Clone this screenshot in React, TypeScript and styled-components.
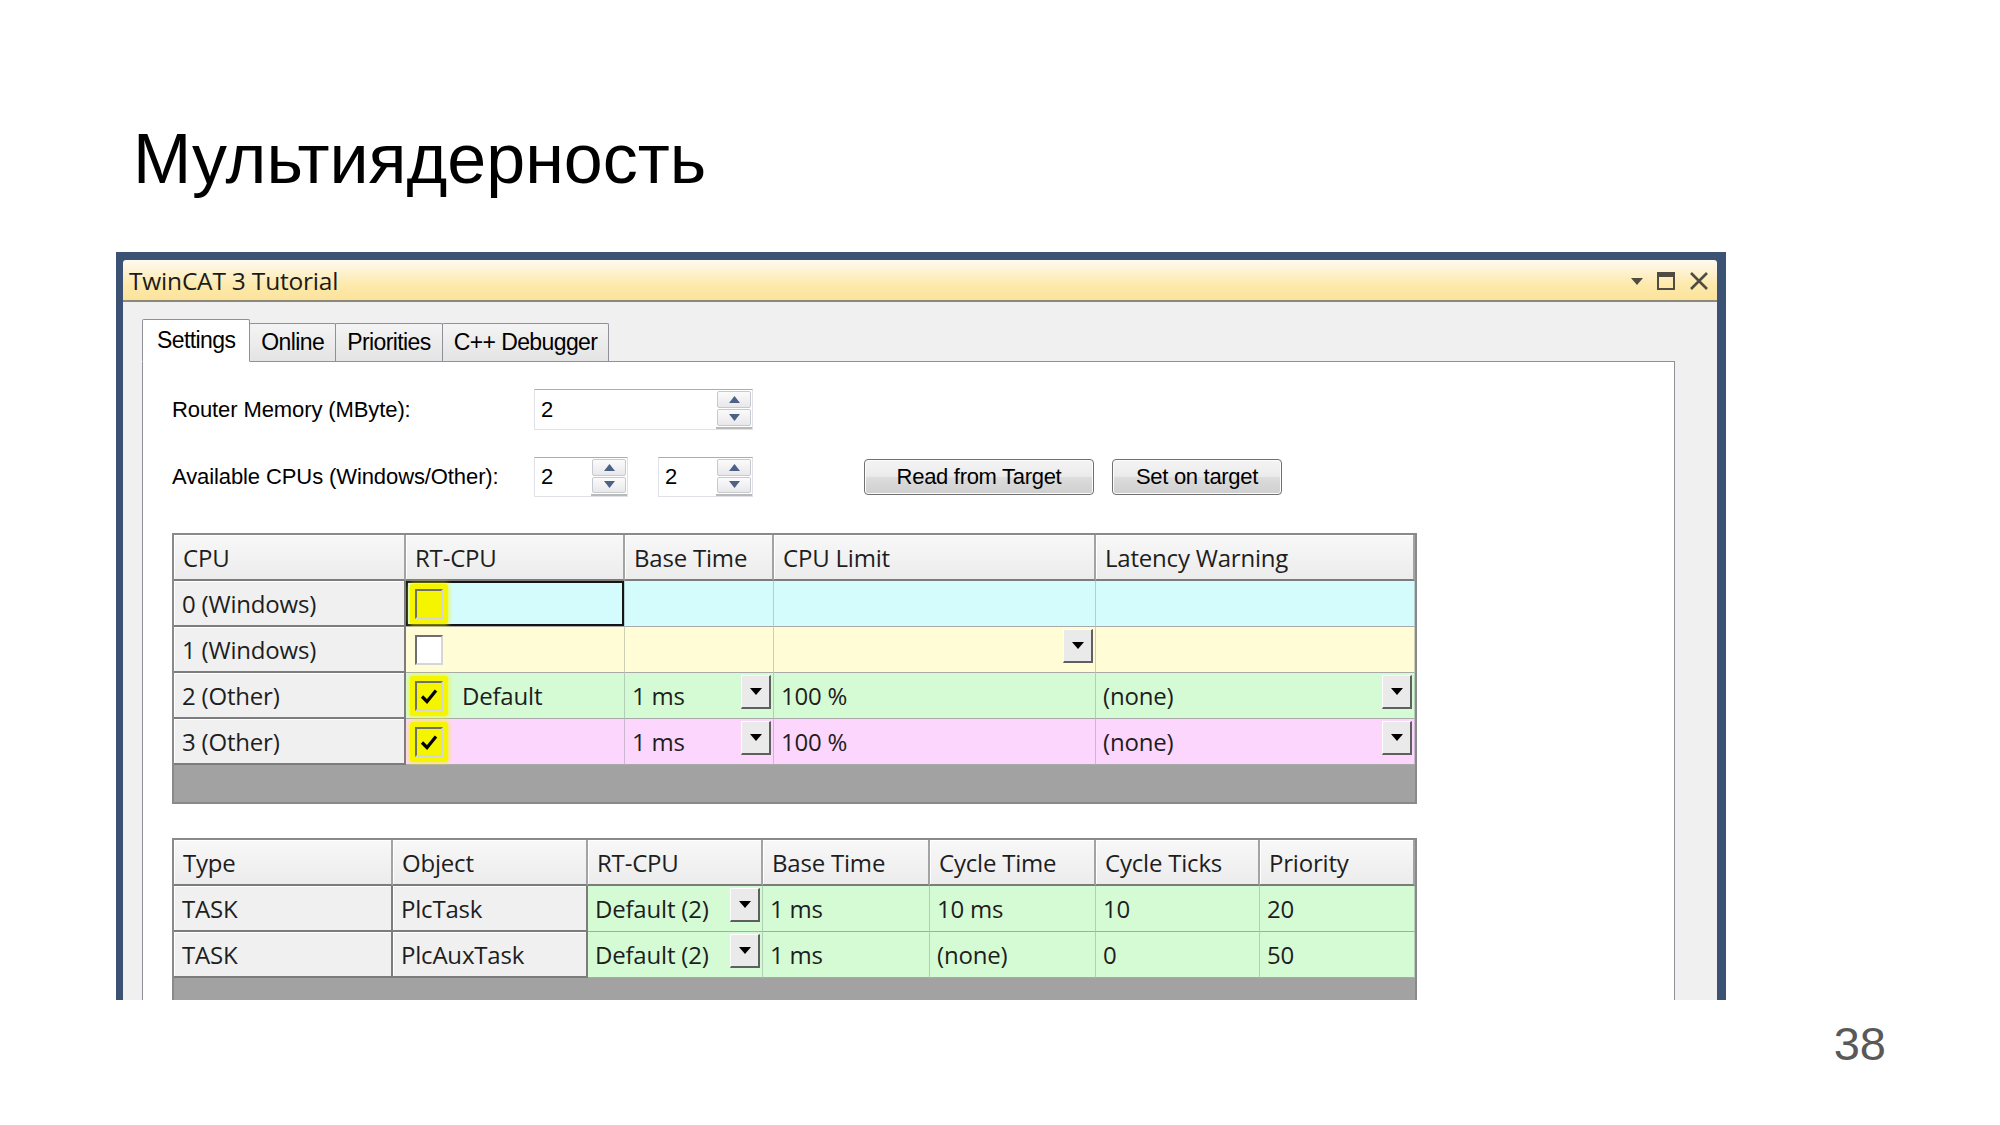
import React from 'react';
import styled, { createGlobalStyle } from 'styled-components';

const GlobalStyle = createGlobalStyle`
  html, body {
    margin: 0;
    padding: 0;
    background: #ffffff;
  }
  body {
    width: 2000px;
    height: 1125px;
    overflow: hidden;
  }
`;

const rowColors = {
  cyan: '#d4fcfc',
  yellow: '#fffcd6',
  green: '#d5fbd5',
  pink: '#fdd6fd',
};

type RowColor = keyof typeof rowColors;

function Check() {
  return (
    <svg width="18" height="16" viewBox="0 0 18 16">
      <path d="M2 8.5 L7 13.5 L16 2.5" fill="none" stroke="#000" strokeWidth="3.2" />
    </svg>
  );
}

function CheckBox({ checked, marked }: { checked?: boolean; marked?: boolean }) {
  return (
    <Marker $on={!!marked}>
      <Box $clear={!!marked}>{checked && <Check />}</Box>
    </Marker>
  );
}

function SpinBox({ width, height, value }: { width: number; height: number; value: string }) {
  return (
    <Spin style={{ width, height }}>
      <SpinValue>{value}</SpinValue>
      <SpinButtons>
        <SpinHalf>
          <svg width="11" height="7" viewBox="0 0 11 7">
            <polygon points="0,7 11,7 5.5,0" fill="#4d6186" />
          </svg>
        </SpinHalf>
        <SpinHalf>
          <svg width="11" height="7" viewBox="0 0 11 7">
            <polygon points="0,0 11,0 5.5,7" fill="#4d6186" />
          </svg>
        </SpinHalf>
      </SpinButtons>
    </Spin>
  );
}

function App() {
  return (
    <Slide>
      <GlobalStyle />
      <SlideTitle>Мультиядерность</SlideTitle>
      <Window>
        <TitleBar>
          <span>TwinCAT 3 Tutorial</span>
          <Controls>
            <svg width="12" height="7" viewBox="0 0 12 7">
              <polygon points="0,0 12,0 6,7" fill="#4f4d42" />
            </svg>
            <svg width="18" height="18" viewBox="0 0 18 18">
              <rect x="1" y="1" width="16" height="16" fill="none" stroke="#4f4d42" strokeWidth="2" />
              <rect x="1" y="1" width="16" height="4" fill="#4f4d42" />
            </svg>
            <svg width="20" height="20" viewBox="0 0 20 20">
              <path d="M2 2 L18 18 M18 2 L2 18" stroke="#4f4d42" strokeWidth="2.6" />
            </svg>
          </Controls>
        </TitleBar>
        <Client>
          <TabStrip>
            <Tab $active>Settings</Tab>
            <Tab>Online</Tab>
            <Tab>Priorities</Tab>
            <Tab>C++ Debugger</Tab>
          </TabStrip>
          <Page>
            <FormRow $h={41}>
              <Label>Router Memory (MByte):</Label>
              <SpinBox width={219} height={41} value="2" />
            </FormRow>
            <FormRow $h={40} $top={27}>
              <Label>Available CPUs (Windows/Other):</Label>
              <SpinBox width={94} height={40} value="2" />
              <Gap $w={30} />
              <SpinBox width={95} height={40} value="2" />
              <Gap $w={111} />
              <Button $w={230}>Read from Target</Button>
              <Gap $w={18} />
              <Button $w={170}>Set on target</Button>
            </FormRow>

            <Grid $cols="232px 219px 149px 322px 319px" $top={36}>
              <HeadCell>CPU</HeadCell>
              <HeadCell>RT-CPU</HeadCell>
              <HeadCell>Base Time</HeadCell>
              <HeadCell>CPU Limit</HeadCell>
              <HeadCell>Latency Warning</HeadCell>

              <KeyCell>0 (Windows)</KeyCell>
              <DataCell $bg="cyan" $selected>
                <CheckBox marked />
              </DataCell>
              <DataCell $bg="cyan" />
              <DataCell $bg="cyan" />
              <DataCell $bg="cyan" />

              <KeyCell>1 (Windows)</KeyCell>
              <DataCell $bg="yellow">
                <CheckBox />
              </DataCell>
              <DataCell $bg="yellow" />
              <DataCell $bg="yellow">
                <Drop />
              </DataCell>
              <DataCell $bg="yellow" />

              <KeyCell>2 (Other)</KeyCell>
              <DataCell $bg="green">
                <CheckBox checked marked />
                <CellText $left={14}>Default</CellText>
              </DataCell>
              <DataCell $bg="green">
                1 ms
                <Drop />
              </DataCell>
              <DataCell $bg="green">100 %</DataCell>
              <DataCell $bg="green">
                (none)
                <Drop />
              </DataCell>

              <KeyCell>3 (Other)</KeyCell>
              <DataCell $bg="pink">
                <CheckBox checked marked />
              </DataCell>
              <DataCell $bg="pink">
                1 ms
                <Drop />
              </DataCell>
              <DataCell $bg="pink">100 %</DataCell>
              <DataCell $bg="pink">
                (none)
                <Drop />
              </DataCell>

              <GrayFooter />
            </Grid>

            <Grid $cols="219px 195px 175px 167px 166px 164px 155px" $top={34}>
              <HeadCell>Type</HeadCell>
              <HeadCell>Object</HeadCell>
              <HeadCell>RT-CPU</HeadCell>
              <HeadCell>Base Time</HeadCell>
              <HeadCell>Cycle Time</HeadCell>
              <HeadCell>Cycle Ticks</HeadCell>
              <HeadCell>Priority</HeadCell>

              <KeyCell>TASK</KeyCell>
              <KeyCell>PlcTask</KeyCell>
              <DataCell $bg="green">
                Default (2)
                <Drop />
              </DataCell>
              <DataCell $bg="green">1 ms</DataCell>
              <DataCell $bg="green">10 ms</DataCell>
              <DataCell $bg="green">10</DataCell>
              <DataCell $bg="green">20</DataCell>

              <KeyCell>TASK</KeyCell>
              <KeyCell>PlcAuxTask</KeyCell>
              <DataCell $bg="green">
                Default (2)
                <Drop />
              </DataCell>
              <DataCell $bg="green">1 ms</DataCell>
              <DataCell $bg="green">(none)</DataCell>
              <DataCell $bg="green">0</DataCell>
              <DataCell $bg="green">50</DataCell>

              <GrayFooter />
            </Grid>
          </Page>
        </Client>
      </Window>
      <PageNumber>38</PageNumber>
    </Slide>
  );
}

const Slide = styled.div`
  width: 2000px;
  height: 1125px;
  box-sizing: border-box;
  padding: 119px 0 0 116px;
  display: flex;
  flex-direction: column;
  font-family: "Liberation Sans", Arial, sans-serif;
`;

const SlideTitle = styled.h1`
  margin: 0 0 0 17px;
  height: 80px;
  font-size: 70px;
  line-height: 80px;
  font-weight: normal;
  color: #000;
`;

const Window = styled.div`
  margin-top: 53px;
  width: 1610px;
  height: 748px;
  flex: none;
  box-sizing: border-box;
  background: #3c5274;
  padding: 8px 9px 0 7px;
  display: flex;
  flex-direction: column;
  overflow: hidden;
`;

const TitleBar = styled.div`
  height: 42px;
  flex: none;
  box-sizing: border-box;
  display: flex;
  align-items: center;
  justify-content: space-between;
  padding: 0 8px 0 6px;
  background: linear-gradient(#fdfaf0 0%, #fdf2d0 30%, #fde9ab 62%, #fce39c 100%);
  border-bottom: 2px solid #8d897a;
  border-radius: 3px 3px 0 0;
  font-family: "Open Sans", "Noto Sans", sans-serif;
  font-size: 24.5px;
  letter-spacing: -0.2px;
  color: #1b1b1b;
`;

const Controls = styled.div`
  display: flex;
  align-items: center;
  gap: 14px;
  margin-top: 2px;
`;

const Client = styled.div`
  flex: 1;
  min-height: 0;
  background: #f0f0f0;
  padding: 17px 42px 0 19px;
  display: flex;
  flex-direction: column;
`;

const TabStrip = styled.div`
  display: flex;
  align-items: flex-end;
  flex: none;
`;

const Tab = styled.div<{ $active?: boolean }>`
  position: relative;
  z-index: 1;
  box-sizing: border-box;
  height: ${(p) => (p.$active ? 43 : 38)}px;
  margin-bottom: ${(p) => (p.$active ? -1 : 0)}px;
  padding: 0 ${(p) => (p.$active ? 14 : 11)}px;
  display: flex;
  align-items: center;
  border: 1px solid #8e9199;
  border-bottom: ${(p) => (p.$active ? '1px solid #ffffff' : 'none')};
  margin-right: -1px;
  background: ${(p) => (p.$active ? '#ffffff' : 'linear-gradient(#f4f4f4, #e4e4e4)')};
  font-size: 23px;
  letter-spacing: -0.6px;
  color: #000;
  border-radius: 2px 2px 0 0;
`;

const Page = styled.div`
  flex: 1;
  min-height: 0;
  background: #ffffff;
  border: 1px solid #8e9199;
  border-bottom: none;
  padding: 27px 0 0 29px;
  display: flex;
  flex-direction: column;
  align-items: flex-start;
`;

const FormRow = styled.div<{ $h: number; $top?: number }>`
  display: flex;
  align-items: center;
  height: ${(p) => p.$h}px;
  margin-top: ${(p) => p.$top || 0}px;
`;

const Label = styled.div`
  width: 362px;
  font-size: 22px;
  letter-spacing: -0.1px;
  color: #000;
`;

const Gap = styled.div<{ $w: number }>`
  width: ${(p) => p.$w}px;
  flex: none;
`;

const Spin = styled.div`
  box-sizing: border-box;
  display: flex;
  background: #fff;
  border: 1px solid #e0e1e6;
  border-top-color: #abadb3;
`;

const SpinValue = styled.div`
  flex: 1;
  display: flex;
  align-items: center;
  padding-left: 6px;
  font-size: 22px;
  color: #000;
`;

const SpinButtons = styled.div`
  width: 34px;
  display: flex;
  flex-direction: column;
  gap: 1px;
  padding: 1px;
  border-bottom: 2px solid #b9b9b9;
`;

const SpinHalf = styled.div`
  flex: 1;
  display: flex;
  align-items: center;
  justify-content: center;
  background: linear-gradient(#fbfbfb, #e8e8ec);
  border: 1px solid #c7c9d0;
  border-radius: 2px;
`;

const Button = styled.div<{ $w: number }>`
  width: ${(p) => p.$w}px;
  height: 36px;
  box-sizing: border-box;
  display: flex;
  align-items: center;
  justify-content: center;
  border: 1px solid #707070;
  border-radius: 4px;
  background: linear-gradient(#f4f4f4 0%, #ebebeb 48%, #dcdcdc 52%, #cfcfcf 100%);
  box-shadow: inset 0 0 0 1px #fcfcfc;
  font-size: 22px;
  letter-spacing: -0.3px;
  color: #000;
`;

const Grid = styled.div<{ $cols: string; $top: number }>`
  margin-top: ${(p) => p.$top}px;
  flex: none;
  display: grid;
  grid-template-columns: ${(p) => p.$cols};
  border: 2px solid #8a8a8a;
  font-family: "Open Sans", "Noto Sans", sans-serif;
  font-size: 24px;
  letter-spacing: -0.2px;
  color: #1e1e1e;
`;

const HeadCell = styled.div`
  box-sizing: border-box;
  height: 46px;
  display: flex;
  align-items: center;
  padding-left: 9px;
  background: linear-gradient(#f8f8f8, #ececec);
  border-right: 2px solid #a3a3a3;
  border-bottom: 2px solid #7c7c7c;
  box-shadow: inset 1px 1px 0 #ffffff;
  &:last-of-type {
    border-right: none;
  }
`;

const KeyCell = styled.div`
  box-sizing: border-box;
  height: 46px;
  display: flex;
  align-items: center;
  padding-left: 8px;
  background: #f0f0f0;
  border-right: 2px solid #7c7c7c;
  border-bottom: 2px solid #7c7c7c;
  box-shadow: inset 1px 1px 0 #ffffff;
`;

const DataCell = styled.div<{ $bg: RowColor; $selected?: boolean }>`
  box-sizing: border-box;
  height: 46px;
  display: flex;
  align-items: center;
  padding-left: 7px;
  background: ${(p) => rowColors[p.$bg]};
  border-right: 1px solid rgba(110, 125, 125, 0.35);
  border-bottom: 1px solid #a9a9a9;
  box-shadow: ${(p) => (p.$selected ? 'inset 0 0 0 2px #151515' : 'none')};
`;

const CellText = styled.span<{ $left: number }>`
  margin-left: ${(p) => p.$left}px;
`;

const Marker = styled.span<{ $on: boolean }>`
  width: 38px;
  height: 40px;
  display: flex;
  align-items: center;
  justify-content: center;
  margin-left: -3px;
  background: ${(p) => (p.$on ? '#f5f500' : 'transparent')};
  box-shadow: ${(p) => (p.$on ? '0 0 4px 1px rgba(245, 245, 0, 0.75)' : 'none')};
  border-radius: 3px;
`;

const Box = styled.span<{ $clear: boolean }>`
  box-sizing: border-box;
  width: 28px;
  height: 30px;
  display: flex;
  align-items: center;
  justify-content: center;
  background: ${(p) => (p.$clear ? 'transparent' : '#ffffff')};
  border-top: 2px solid #6e6e6e;
  border-left: 2px solid #6e6e6e;
  border-right: 2px solid #d6d6d6;
  border-bottom: 2px solid #d6d6d6;
`;

const Drop = styled.span`
  box-sizing: border-box;
  width: 30px;
  height: 34px;
  margin-left: auto;
  margin-right: 2px;
  align-self: flex-start;
  margin-top: 2px;
  flex: none;
  display: flex;
  align-items: center;
  justify-content: center;
  background: #eaeaea;
  border-top: 1px solid #ffffff;
  border-left: 1px solid #ffffff;
  border-right: 2px solid #5f5f5f;
  border-bottom: 2px solid #5f5f5f;
  &::after {
    content: '';
    border-left: 6px solid transparent;
    border-right: 6px solid transparent;
    border-top: 7px solid #000;
  }
`;

const GrayFooter = styled.div`
  grid-column: 1 / -1;
  height: 37px;
  background: #a2a2a2;
`;

const PageNumber = styled.div`
  margin-top: 17px;
  padding-right: 114px;
  text-align: right;
  font-size: 47px;
  line-height: 54px;
  color: #595959;
`;

export default App;
